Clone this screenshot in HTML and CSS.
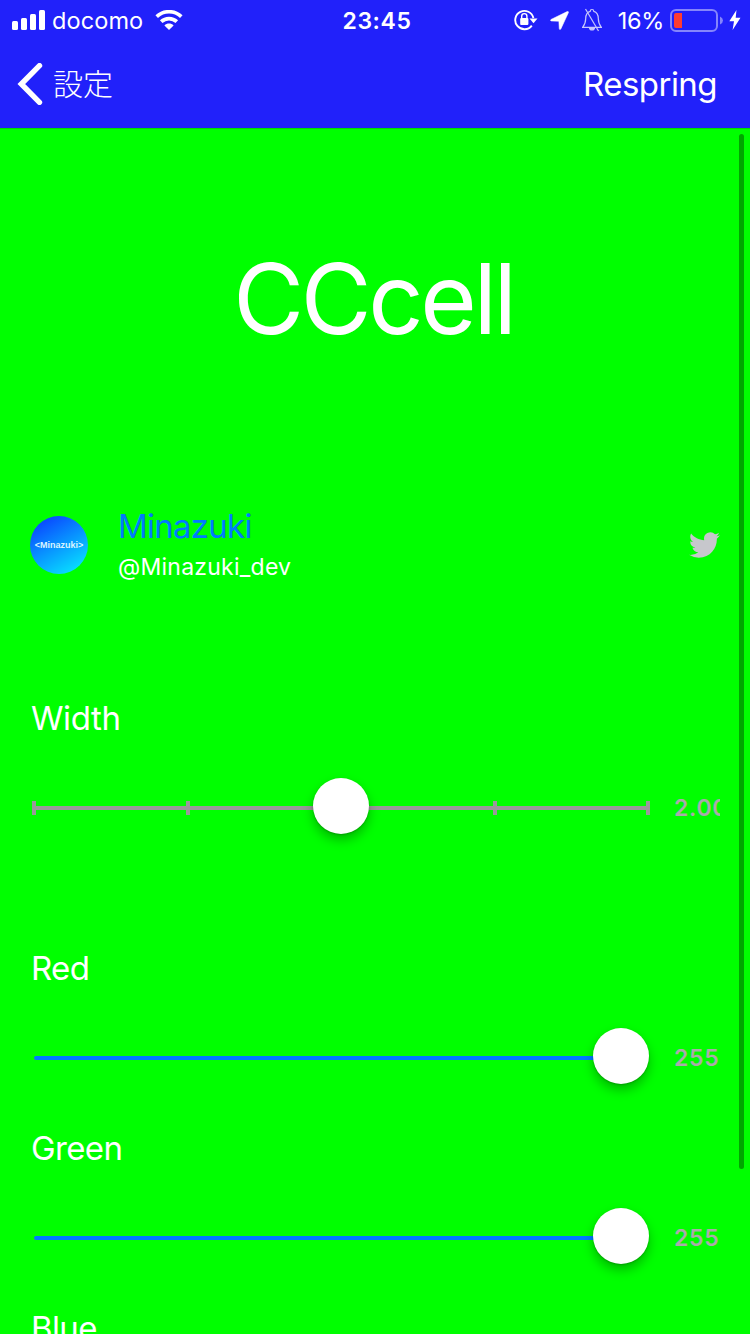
FILE: index.html
```html
<!DOCTYPE html>
<html lang="ja">
<head>
<meta charset="utf-8">
<title>CCcell</title>
<link rel="stylesheet" href="styles.css">
</head>
<body>
<div class="screen">
  <header class="header">
    <div class="status">
      <div class="status-left">
        <svg class="signal" width="33" height="20" viewBox="0 0 33 20" fill="#fff"><rect x="0" y="11" width="6" height="9" rx="1.5"/><rect x="9" y="8" width="6" height="12" rx="1.5"/><rect x="18" y="4" width="6" height="16" rx="1.5"/><rect x="27" y="0" width="6" height="20" rx="1.5"/></svg>
        <span class="carrier">docomo</span>
        <svg class="wifi" width="28" height="20" viewBox="0 0 28 20"><path d="M1.7 6.6C8.6.1 19.400.1 26.300 6.600M6.200 11.700C10.600 7.500 17.400 7.500 21.800 11.700" fill="none" stroke="#fff" stroke-width="3.700"/><path d="M14 20L9.400 15.400C12 13 16 13 18.600 15.400Z" fill="#fff"/></svg>
      </div>
      <span class="clock">23:45</span>
      <div class="status-right">
        <svg class="lock" width="24" height="22" viewBox="0 0 24 22"><path d="M17.800 16.600A9.200 9.200 0 1 1 19.400 9" fill="none" stroke="#fff" stroke-width="1.900"/><path d="M15.500 9.500H23.500L19.500 14.300Z" fill="#fff"/><rect x="6.200" y="9" width="8.200" height="7" rx="1" fill="#fff"/><path d="M7.700 9.500V7.200a2.600 2.600 0 0 1 5.200 0V9.500" fill="none" stroke="#fff" stroke-width="1.400"/></svg>
        <svg class="arrow" width="19" height="19" viewBox="0 0 19 19"><path d="M17.200.6L1 8.500C.3 9 .5 9.800 1.200 9.900L8.900 10.200 9.300 17.600C9.400 18.800 10.400 18.800 10.900 17.800L18.400 1.600C18.700.8 18 .2 17.200.6Z" fill="#fff" stroke="#fff" stroke-width=".6"/></svg>
        <svg class="bell" width="20" height="24" viewBox="0 0 20 24" fill="none" stroke="#c8c8fd" stroke-width="1.200"><path d="M8.200 3.300a1.800 1.800 0 0 1 3.600 0C15 4.200 16.300 7 16.300 10.500 16.300 15 17 16.500 19.400 19.300H.6C3 16.500 3.700 15 3.700 10.500 3.700 7 5 4.200 8.200 3.300Z"/><path d="M7.500 19.500a2.500 2.500 0 0 0 5 0Z" fill="#c8c8fd"/><path d="M3.500 1L16.500 23"/></svg>
        <span class="percent">16%</span>
        <svg class="battery" width="53" height="23" viewBox="0 0 53 23"><rect x="1" y="1" width="46" height="21" rx="5" fill="none" stroke="#8585fb" stroke-width="2"/><path d="M50 7.500Q53 9 53 11.500T50 15.500Z" fill="#8585fb"/><path d="M6 4H12V19H6Q4 19 4 17V6Q4 4 6 4Z" fill="#ff3b30"/></svg>
        <svg class="bolt" width="12" height="20" viewBox="0 0 12 20"><path d="M7.500 0L.3 11.300H5L3.600 20 11.500 7.800H6.700Z" fill="#fff"/></svg>
      </div>
    </div>
    <nav class="nav">
      <a class="back"><svg width="26" height="42" viewBox="0 0 26 42"><path d="M22.500 2.700L4.300 21L22.500 39.300" fill="none" stroke="#fff" stroke-width="5.400" stroke-linecap="round" stroke-linejoin="miter"/></svg><span class="back-text">設定</span></a>
      <a class="respring">Respring</a>
    </nav>
  </header>
  <main class="content">
    <h1 class="title">CCcell</h1>
    <section class="profile">
      <div class="avatar">&lt;Minazuki&gt;</div>
      <div class="names"><div class="name">Minazuki</div><div class="handle">@Minazuki_dev</div></div>
      <svg class="twitter" width="31" height="26" viewBox="0 0 24 20" preserveAspectRatio="none"><path fill="#c7c7cc" d="M23.950 2.570a10 10 0 0 1-2.820.77 4.960 4.960 0 0 0 2.160-2.720c-.950.550-2 .950-3.130 1.180a4.920 4.920 0 0 0-8.380 4.480C7.690 6.090 4.070 4.130 1.640 1.160a4.820 4.820 0 0 0-.670 2.480c0 1.710.870 3.210 2.190 4.100a4.900 4.900 0 0 1-2.230-.620v.060a4.920 4.920 0 0 0 3.950 4.830 5 5 0 0 1-2.210.080 4.940 4.940 0 0 0 4.600 3.420A9.870 9.870 0 0 1 0 17.540a13.990 13.990 0 0 0 7.560 2.210c9.050 0 14-7.500 14-13.980 0-.210 0-.420-.020-.630a9.940 9.940 0 0 0 2.460-2.550z"/></svg>
    </section>
    <section class="group">
      <div class="label width-label">Width</div>
      <div class="slider">
        <div class="track stepped"><i></i><i></i><i></i><i></i><i></i><b class="knob middle"></b></div>
        <span class="value">2.00</span>
      </div>
    </section>
    <section class="group">
      <div class="label">Red</div>
      <div class="slider"><div class="track"><b class="knob"></b></div><span class="value">255</span></div>
      <div class="label green-label">Green</div>
      <div class="slider"><div class="track"><b class="knob"></b></div><span class="value">255</span></div>
      <div class="label">Blue</div>
    </section>
  </main>
  <div class="scrollbar"></div>
</div>
</body>
</html>
```
FILE: styles.css
```css
* { box-sizing: border-box; }
body { margin: 0; overflow: hidden; }
svg { display: block; flex: none; }
.screen {
  position: relative;
  width: 750px;
  height: 1334px;
  overflow: hidden;
  background: #00ff00;
  color: #fff;
  font-family: Inter, "Noto Sans CJK JP", sans-serif;
  white-space: nowrap;
}
.header { height: 129px; background: #2121fa; border-bottom: 1px solid #00d800; }
.status { display: grid; grid-template-columns: 1fr auto 1fr; align-items: center; height: 40px; }
.status-left { display: flex; align-items: center; padding-left: 12px; }
.carrier { width: 91px; margin: 1px 12px 0 7px; font-size: 23.5px; line-height: 30px; letter-spacing: 0.1px; }
.clock { margin-top: 1px; padding-left: 4px; font-size: 23px; font-weight: 600; letter-spacing: 0.6px; }
.status-right { display: flex; align-items: center; justify-content: flex-end; padding-right: 9px; }
.arrow { margin: 1px 14px 0 12px; }
.bell { margin-right: 1px; margin-left: -1px; }
.percent { margin: 1px 6px 0 15px; font-size: 23.5px; letter-spacing: -0.3px; }
.bolt { margin-left: 6px; }
.nav { display: flex; align-items: center; justify-content: space-between; height: 88px; padding: 0 33px 0 17px; }
.back { display: flex; align-items: center; gap: 10px; font-family: "Noto Sans CJK JP", sans-serif; font-size: 30px; font-weight: 300; }
.back-text { line-height: 40px; padding-bottom: 4px; }
.respring { font-size: 33px; letter-spacing: -0.55px; }
.title { display: flex; align-items: center; justify-content: center; height: 356px; margin: 0; padding: 0 3px 18px 0; font-size: 97px; font-weight: 400; letter-spacing: -3.4px; }
.profile { display: flex; align-items: center; height: 120px; padding: 0 30px 0 30px; }
.avatar {
  display: flex;
  align-items: center;
  justify-content: center;
  width: 58px;
  height: 58px;
  border-radius: 50%;
  background: linear-gradient(150deg, #0a45ff 10%, #0890ff 48%, #08e0ff 90%);
  color: #d8f4ff;
  font: bold 9px "Liberation Sans", sans-serif;
}
.names { flex: 1; margin: 3px 0 0 30px; }
.name { height: 41px; color: #007aff; font-size: 33px; line-height: 41px; letter-spacing: -0.75px; }
.handle { height: 40px; font-size: 23px; line-height: 40px; letter-spacing: 0.25px; }
.twitter { margin-bottom: 1px; }
.group { margin-top: 70px; }
.profile + .group { margin-top: 68px; }
.label { height: 90px; padding-left: 31px; font-size: 33px; line-height: 90px; letter-spacing: -0.65px; }
.width-label { letter-spacing: -0.4px; }
.slider { display: flex; align-items: center; justify-content: space-between; height: 90px; padding: 0 30px 0 34px; }
.track { position: relative; width: 614px; height: 4px; border-radius: 2px; background: #007aff; }
.stepped { display: flex; align-items: center; justify-content: space-between; width: 618px; margin-left: -2px; background: #999; }
.stepped i { width: 4px; height: 14px; background: #999; }
.knob { position: absolute; top: -28px; right: -1px; width: 56px; height: 56px; border-radius: 50%; background: #fff; box-shadow: 0 6px 12px rgba(0, 0, 0, 0.28), 0 1px 2px rgba(0, 0, 0, 0.2); }
.middle { left: 281px; }
.value { width: 46px; overflow: hidden; color: #aaa; font-size: 23px; font-weight: 600; line-height: 34px; letter-spacing: 0.7px; }
.scrollbar { position: absolute; top: 134px; right: 6px; width: 5px; height: 1035px; border-radius: 3px; background: #00a600; }
```
